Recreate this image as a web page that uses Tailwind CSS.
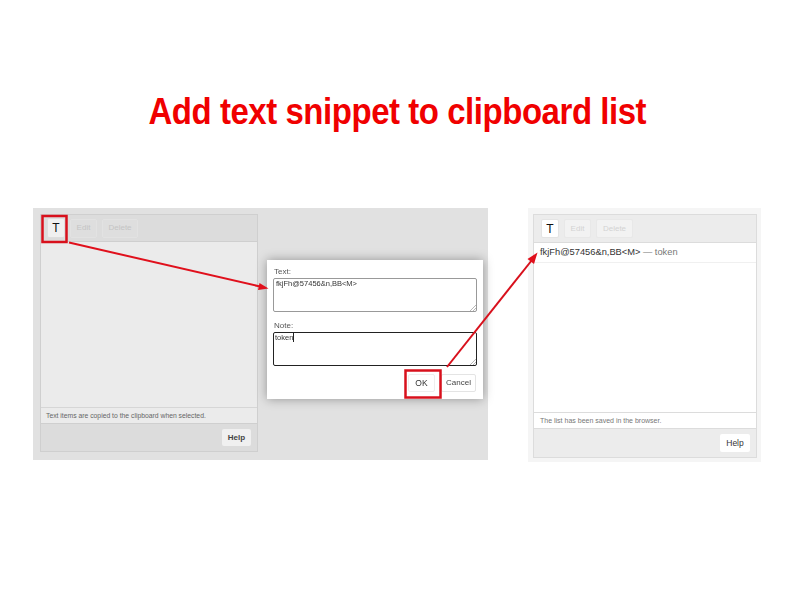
<!DOCTYPE html>
<html><head><meta charset="utf-8"><script src="https://cdn.jsdelivr.net/npm/@tailwindcss/browser@4"></script></head>
<body class="bg-white">
<div class="relative w-[794px] h-[596px] overflow-hidden font-['Liberation_Sans',Arial,sans-serif]">
  <h1 class="pt-[88px] h-[208px] text-center text-[#f00000] font-bold text-[37px] leading-[48px] whitespace-nowrap"><span class="inline-block scale-x-[0.891] tracking-[-0.5px]">Add text snippet to clipboard list</span></h1>
  <div class="flex items-start pl-[33px] gap-[40px] blur-[0.35px]">
    <!-- left -->
    <div class="relative w-[455px] h-[252px] bg-[#e1e1e1] pt-[6px] pl-[7px]">
      <div class="w-[218px] h-[238px] border border-[#cfcfcf] flex flex-col bg-[#ebebeb]">
        <div class="h-[27px] bg-[#dcdcdc] border-b border-[#cfcfcf] flex items-center gap-[5px] pl-[6px] shrink-0">
          <div class="w-[18px] h-[20px] rounded-[2px] bg-[#f0f0f0] border border-[#dedede] flex items-center justify-center text-[12px] text-[#111]">T</div>
          <div class="w-[27px] h-[19px] rounded-[2px] border border-[#e2e2e2] bg-[#dedede] flex items-center justify-center text-[8px] text-[#c4c4c4]">Edit</div>
          <div class="w-[36px] h-[19px] rounded-[2px] border border-[#e2e2e2] bg-[#dedede] flex items-center justify-center text-[8px] text-[#c4c4c4]">Delete</div>
        </div>
        <div class="flex-1"></div>
        <div class="h-[16px] border-t border-[#d6d6d6] pl-[5px] text-[6.8px] leading-[15px] text-[#666] shrink-0 whitespace-nowrap">Text items are copied to the clipboard when selected.</div>
        <div class="h-[28px] bg-[#dcdcdc] border-t border-[#cfcfcf] flex items-center justify-end pr-[6px] shrink-0">
          <div class="w-[29px] h-[17px] bg-[#f0f0f0] rounded-[2px] flex items-center justify-center text-[8px] font-bold text-[#444]">Help</div>
        </div>
      </div>
      <!-- dialog -->
      <div class="absolute left-[234px] top-[52px] w-[216px] h-[139px] bg-white shadow-[0_0_10px_rgba(0,0,0,0.35)] pl-[6px] pr-[6px] pt-[6px] flex flex-col text-[#555]">
        <div class="text-[8px] leading-[11px] pl-[1px]">Text:</div>
        <div class="relative mt-[1px] w-[204px] h-[34px] border border-[#999] rounded-[2px] text-[7.5px] leading-[10px] pl-[2px] text-[#333]">fkjFh@57456&amp;n,BB&lt;M&gt;
          <svg class="absolute right-0 bottom-0" width="6" height="6" viewBox="0 0 6 6" fill="none" stroke="#999" stroke-width="0.7"><path d="M0 6 L6 0 M3 6 L6 3"/></svg>
        </div>
        <div class="text-[8px] leading-[11px] mt-[8px] pl-[1px]">Note:</div>
        <div class="relative mt-[1px] w-[204px] h-[34px] border-[1.5px] border-[#222] rounded-[2px] text-[7.5px] leading-[10px] pl-[1px] text-[#333] flex items-start"><span>token</span><span class="w-px h-[9px] bg-[#222]"></span>
          <svg class="absolute right-0 bottom-0" width="6" height="6" viewBox="0 0 6 6" fill="none" stroke="#999" stroke-width="0.7"><path d="M0 6 L6 0 M3 6 L6 3"/></svg>
        </div>
        <div class="flex justify-end gap-[6px] mt-[8px] pr-[1px]">
          <div class="w-[27px] h-[18px] rounded-[2px] border border-[#eee] flex items-center justify-center text-[8.5px] text-[#333]">OK</div>
          <div class="w-[35px] h-[18px] rounded-[2px] border border-[#e4e4e4] flex items-center justify-center text-[8px] text-[#444]">Cancel</div>
        </div>
      </div>
    </div>
    <!-- right -->
    <div class="w-[233px] h-[254px] bg-[#f5f5f5] pt-[6px] pl-[5px]">
      <div class="w-[224px] h-[244px] border border-[#dcdcdc] bg-white flex flex-col">
        <div class="h-[28px] bg-[#ececec] border-b border-[#dcdcdc] flex items-center gap-[5px] pl-[7px] shrink-0">
          <div class="w-[18px] h-[19px] rounded-[2px] bg-white border border-[#e4e4e4] flex items-center justify-center text-[12px] text-[#111]">T</div>
          <div class="w-[27px] h-[19px] rounded-[2px] bg-[#f2f2f2] border border-[#e8e8e8] flex items-center justify-center text-[8px] text-[#d2d2d2]">Edit</div>
          <div class="w-[37px] h-[19px] rounded-[2px] bg-[#f2f2f2] border border-[#e8e8e8] flex items-center justify-center text-[8px] text-[#d2d2d2]">Delete</div>
        </div>
        <div class="h-[20px] border-b border-[#f0f0f0] pl-[6px] text-[9.3px] leading-[19px] text-[#333] shrink-0">fkjFh@57456&amp;n,BB&lt;M&gt; <span class="text-[#777]">— token</span></div>
        <div class="flex-1"></div>
        <div class="h-[16px] border-t border-[#dcdcdc] pl-[6px] text-[7px] leading-[15px] text-[#777] shrink-0">The list has been saved in the browser.</div>
        <div class="h-[29px] bg-[#ececec] border-t border-[#dcdcdc] flex items-center justify-end pr-[6px] shrink-0">
          <div class="w-[30px] h-[18px] bg-white rounded-[2px] flex items-center justify-center text-[8.5px] text-[#333]">Help</div>
        </div>
      </div>
    </div>
  </div>
  <!-- annotations -->
  <svg class="absolute inset-0 pointer-events-none" width="794" height="596" viewBox="0 0 794 596" fill="none">
    <rect x="42.5" y="216" width="24" height="26" stroke="#d8101c" stroke-width="2.5"/>
    <rect x="405.5" y="370.5" width="35" height="27" stroke="#d8101c" stroke-width="2.5"/>
    <path d="M69 242.5 L260 286.5" stroke="#e0101c" stroke-width="2"/>
    <path d="M268.5 288.5 L258 290 L259.5 283 Z" fill="#e0101c"/>
    <path d="M447 367 L532 260" stroke="#d8101c" stroke-width="2"/>
    <path d="M537.5 252.5 L534 264 L527.5 259 Z" fill="#e0101c"/>
  </svg>
</div>
</body></html>
